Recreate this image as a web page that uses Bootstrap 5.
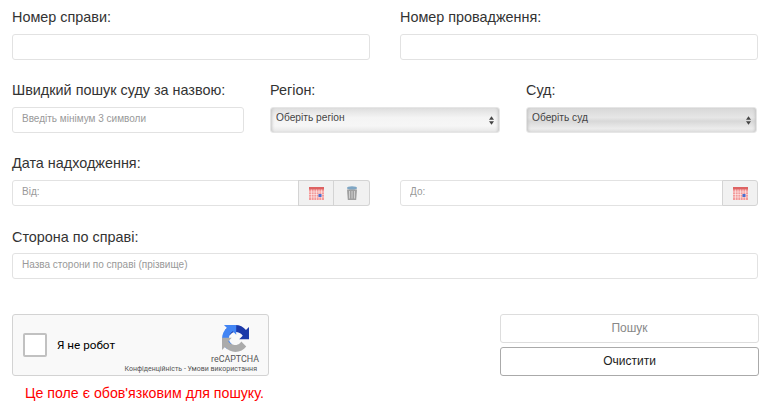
<!DOCTYPE html>
<html lang="uk">
<head>
<meta charset="utf-8">
<title>Пошук</title>
<link rel="stylesheet" href="https://cdn.jsdelivr.net/npm/bootstrap@5.3.0/dist/css/bootstrap.min.css">
<style>
body{font-family:"Liberation Sans",Arial,sans-serif;background:#fff;color:#333;overflow:hidden}
.page-wrap{padding:0 14px 0 12px}
.grid-two{display:grid;grid-template-columns:358px 358px;column-gap:30px}
.grid-three{display:grid;grid-template-columns:232px 230px 231px;column-gap:26px}
.fld-label{display:block;font-size:14.4px;line-height:20px;margin:0 0 7px;color:#333}
.fld-input.form-control{height:26px;padding:0 9px 3px;font-size:10px;border:1px solid #e2e2e2;border-radius:3px;color:#555;box-shadow:none;min-height:0}
.fld-input.form-control::placeholder{color:#999;opacity:1}
.fake-select{height:26px;border:1px solid #e6e6e6;border-radius:3px;padding:0 5px;font-size:10.2px;line-height:20px;color:#444;background:linear-gradient(#dedede,#f4f4f4 40%,#f6f6f6 75%,#e6e6e6);box-shadow:inset 3px 0 3px -2px #c4c4c4,inset -3px 0 3px -2px #c4c4c4}
.fake-select.alt-sel{background:linear-gradient(#d8d8d8,#e6e6e6 40%,#d8d8d8 55%,#ececec 85%,#dedede)}
.addon{width:36px;height:26px;background:#f1f1f1;border:1px solid #d4d4d4;border-left-width:0}
.addon-first{border-left-width:1px;margin-left:-1px}
.addon-end{border-radius:0 3px 3px 0}
.fld-input.with-addon{border-radius:3px 0 0 3px}
.row-a{margin-top:7px}
.row-b{margin-top:20px}
.row-c{margin-top:20px}
.row-d{margin-top:21px}
.row-d .fld-label{margin-bottom:6px}
.cap-row{margin-top:35px}
.cap-box{width:257px;height:62px;background:#f9f9f9;border:1px solid #d3d3d3;border-radius:3px;position:relative}
.cap-check{width:24px;height:24px;background:#fff;border:2px solid #c1c1c1;border-radius:2px;margin-left:10px}
.cap-text{font-family:Roboto,"Liberation Sans",sans-serif;font-size:11.7px;color:#000;margin:2px 0 0 10px}
.cap-logo{position:absolute;left:209px;top:10px;width:27px;height:27px}
.cap-name{position:absolute;right:9px;top:38px;font-family:Roboto,sans-serif;font-size:8.9px;color:#555}
.cap-links{position:absolute;right:11px;top:49px;font-family:Roboto,sans-serif;font-size:7px;color:#555;white-space:nowrap}
.err-text{font-size:14.2px;line-height:18px;color:#f00;margin:8px 0 0 13px}
.act-col{width:259px;margin-right:-1px}
.act-btn.btn{height:29px;padding:0 0 2px;font-size:12px;line-height:24px;border-radius:3px;background:#fff;color:#222;border:1px solid #aaa;width:100%;display:block}
.act-btn.act-off.btn{color:#888;border-color:#ddd;opacity:1;margin-bottom:4px;height:29px}
</style>
</head>
<body>
<div class="page-wrap">
  <div class="grid-two row-a">
    <div><label class="fld-label">Номер справи:</label><input class="form-control fld-input" type="text"></div>
    <div><label class="fld-label">Номер провадження:</label><input class="form-control fld-input" type="text"></div>
  </div>
  <div class="grid-three row-b">
    <div><label class="fld-label">Швидкий пошук суду за назвою:</label><input class="form-control fld-input" type="text" placeholder="Введіть мінімум 3 символи"></div>
    <div><label class="fld-label">Регіон:</label>
      <div class="fake-select d-flex justify-content-between"><span>Оберіть регіон</span>
        <svg width="5" height="9" viewBox="0 0 6 10" class="align-self-center"><path d="M3 0 6 4H0zM3 10 0 6h6z" fill="#444"/></svg></div></div>
    <div><label class="fld-label">Суд:</label>
      <div class="fake-select alt-sel d-flex justify-content-between"><span>Оберіть суд</span>
        <svg width="5" height="9" viewBox="0 0 6 10" class="align-self-center"><path d="M3 0 6 4H0zM3 10 0 6h6z" fill="#444"/></svg></div></div>
  </div>
  <div class="row-c">
    <label class="fld-label">Дата надходження:</label>
    <div class="grid-two">
      <div class="d-flex">
        <input class="form-control fld-input with-addon" type="text" placeholder="Від:">
        <span class="addon addon-first flex-shrink-0 d-flex align-items-center justify-content-center">
          <svg width="15" height="13" viewBox="0 0 15 13"><rect width="15" height="13" fill="#f39a9a"/><rect width="15" height="2.500" fill="#dd6262"/><path d="M0 5h15M0 7.500h15M0 10h15M2.500 2.500V13M5 2.500V13M7.500 2.500V13M10 2.500V13M12.500 2.500V13" stroke="#fff" stroke-width=".5"/><rect x="9.500" y="7" width="3" height="3" fill="#4a6fd0"/></svg>
        </span>
        <span class="addon addon-end flex-shrink-0 d-flex align-items-center justify-content-center">
          <svg width="12" height="14" viewBox="0 0 12 14"><ellipse cx="6" cy="2" rx="5" ry="1.800" fill="#7fa6c4"/><path d="M1 3.500h10l-.8 10.500H1.800z" fill="#a0a0a0"/><path d="M3.500 5v7.500M6 5v7.500M8.500 5v7.500" stroke="#cfcfcf" stroke-width="1"/></svg>
        </span>
      </div>
      <div class="d-flex">
        <input class="form-control fld-input with-addon" type="text" placeholder="До:">
        <span class="addon addon-first addon-end flex-shrink-0 d-flex align-items-center justify-content-center">
          <svg width="15" height="13" viewBox="0 0 15 13"><rect width="15" height="13" fill="#f39a9a"/><rect width="15" height="2.500" fill="#dd6262"/><path d="M0 5h15M0 7.500h15M0 10h15M2.500 2.500V13M5 2.500V13M7.500 2.500V13M10 2.500V13M12.500 2.500V13" stroke="#fff" stroke-width=".5"/><rect x="9.500" y="7" width="3" height="3" fill="#4a6fd0"/></svg>
        </span>
      </div>
    </div>
  </div>
  <div class="row-d">
    <label class="fld-label">Сторона по справі:</label>
    <input class="form-control fld-input" type="text" placeholder="Назва сторони по справі (прізвище)">
  </div>
  <div class="cap-row d-flex justify-content-between">
    <div>
      <div class="cap-box d-flex align-items-center">
        <div class="cap-check"></div>
        <div class="cap-text">Я не робот</div>
        <svg class="cap-logo" viewBox="0 0 64 64">
          <path d="M64 31.955l-.033-1.37V4.687l-7.16 7.16C50.948 4.674 42.033.093 32.05.093c-10.4 0-19.622 4.96-25.458 12.64l11.736 11.86c1.15-2.127 2.784-3.955 4.77-5.33 2.048-1.598 4.95-2.904 9.952-2.904.604 0 1.07.07 1.414.204 6.196.49 11.566 3.91 14.728 8.872l-8.307 8.308c10.523-.04 22.4-.066 24.1.203" fill="#1c3aa9"/>
          <path d="M31.95.003l-1.37.033H4.687l7.16 7.16C4.674 13.05.093 21.965.093 31.95c0 10.4 4.96 19.622 12.64 25.458l11.86-11.736c-2.127-1.15-3.955-2.784-5.33-4.77-1.598-2.048-2.904-4.95-2.904-9.952 0-.604.07-1.07.204-1.414.49-6.196 3.91-11.566 8.872-14.728l8.308 8.307c-.04-10.523-.066-22.4.203-24.1" fill="#4285f4"/>
          <path d="M0 31.950l.033 1.370v25.900l7.160-7.160c5.860 7.173 14.774 11.754 24.760 11.754 10.400 0 19.622-4.960 25.458-12.640l-11.736-11.860c-1.150 2.127-2.784 3.955-4.770 5.330-2.048 1.598-4.950 2.904-9.952 2.904-.604 0-1.070-.070-1.414-.204-6.196-.490-11.566-3.910-14.728-8.872l8.307-8.308c-10.523.040-22.400.066-24.100-.203" fill="#ababab"/>
        </svg>
        <div class="cap-name">reCAPTCHA</div>
        <div class="cap-links">Конфіденційність - Умови використання</div>
      </div>
      <div class="err-text">Це поле є обов'язковим для пошуку.</div>
    </div>
    <div class="act-col">
      <button class="btn act-btn act-off" type="button">Пошук</button>
      <button class="btn act-btn" type="button">Очистити</button>
    </div>
  </div>
</div>
</body>
</html>
